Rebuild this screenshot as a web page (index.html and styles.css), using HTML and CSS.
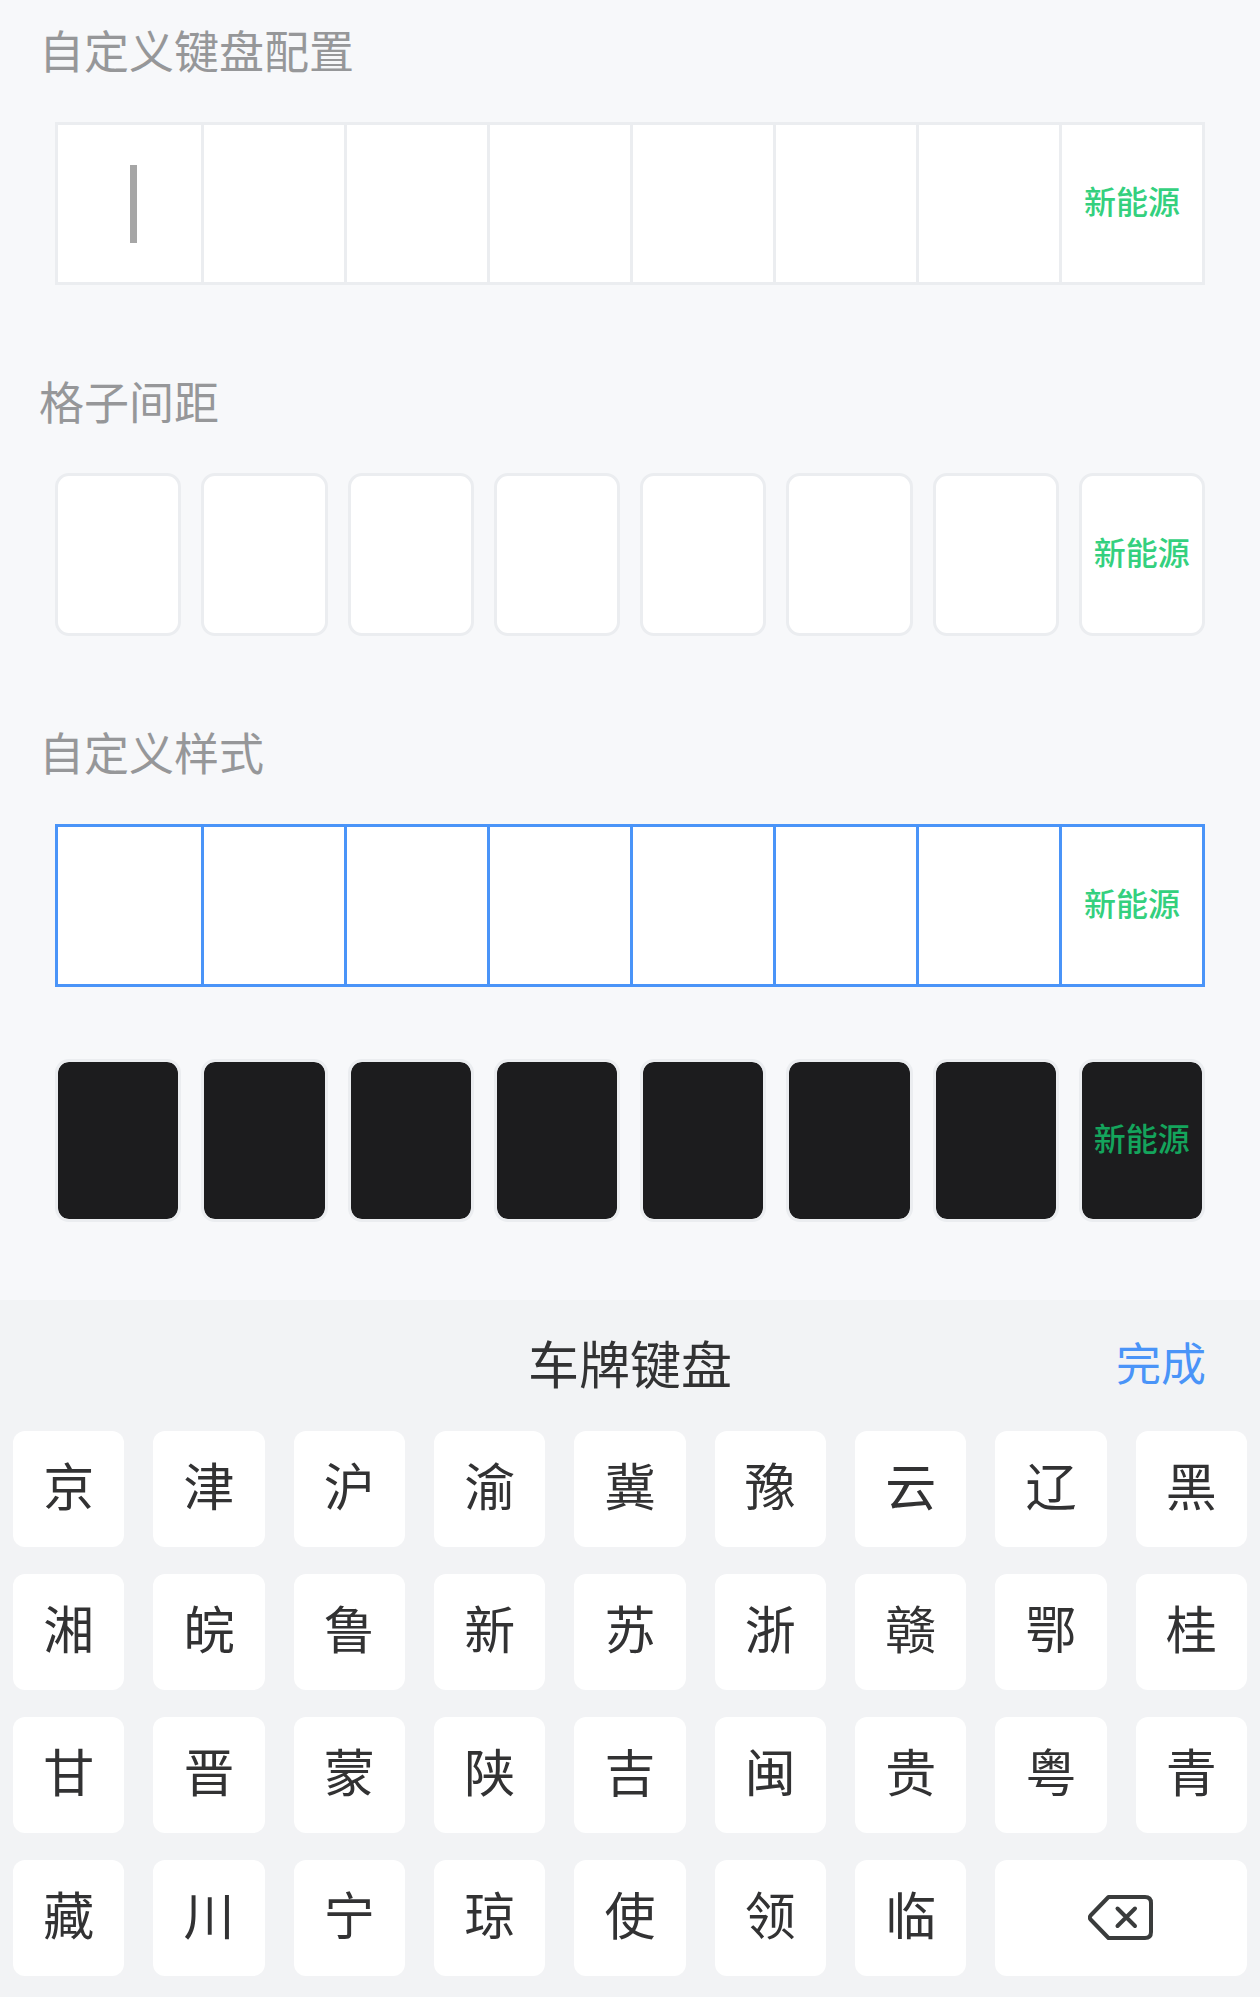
FILE: index.html
```
<!DOCTYPE html>
<html lang="zh-CN">
<head>
<meta charset="utf-8">
<meta name="viewport" content="width=device-width, initial-scale=1">
<title>车牌键盘</title>
<link rel="stylesheet" href="styles.css">
</head>
<body>
<main class="demo">
  <section class="block">
    <h2 class="block-title">自定义键盘配置</h2>
    <div class="plate plate-joined">
      <button class="cell" aria-label="第1位"><span class="caret"></span></button>
      <button class="cell" aria-label="第2位"></button>
      <button class="cell" aria-label="第3位"></button>
      <button class="cell" aria-label="第4位"></button>
      <button class="cell" aria-label="第5位"></button>
      <button class="cell" aria-label="第6位"></button>
      <button class="cell" aria-label="第7位"></button>
      <button class="cell">新能源</button>
    </div>
  </section>
  <section class="block">
    <h2 class="block-title">格子间距</h2>
    <div class="plate plate-spaced">
      <button class="cell" aria-label="第1位"></button>
      <button class="cell" aria-label="第2位"></button>
      <button class="cell" aria-label="第3位"></button>
      <button class="cell" aria-label="第4位"></button>
      <button class="cell" aria-label="第5位"></button>
      <button class="cell" aria-label="第6位"></button>
      <button class="cell" aria-label="第7位"></button>
      <button class="cell">新能源</button>
    </div>
  </section>
  <section class="block">
    <h2 class="block-title">自定义样式</h2>
    <div class="plate plate-joined plate-blue">
      <button class="cell" aria-label="第1位"></button>
      <button class="cell" aria-label="第2位"></button>
      <button class="cell" aria-label="第3位"></button>
      <button class="cell" aria-label="第4位"></button>
      <button class="cell" aria-label="第5位"></button>
      <button class="cell" aria-label="第6位"></button>
      <button class="cell" aria-label="第7位"></button>
      <button class="cell">新能源</button>
    </div>
    <div class="plate plate-spaced plate-dark">
      <button class="cell" aria-label="第1位"></button>
      <button class="cell" aria-label="第2位"></button>
      <button class="cell" aria-label="第3位"></button>
      <button class="cell" aria-label="第4位"></button>
      <button class="cell" aria-label="第5位"></button>
      <button class="cell" aria-label="第6位"></button>
      <button class="cell" aria-label="第7位"></button>
      <button class="cell">新能源</button>
    </div>
  </section>
</main>
<section class="keyboard" aria-label="车牌键盘">
  <header class="keyboard-head">
    <h2 class="keyboard-title">车牌键盘</h2>
    <button class="done">完成</button>
  </header>
  <div class="keys">
    <button class="key">京</button>
    <button class="key">津</button>
    <button class="key">沪</button>
    <button class="key">渝</button>
    <button class="key">冀</button>
    <button class="key">豫</button>
    <button class="key">云</button>
    <button class="key">辽</button>
    <button class="key">黑</button>
    <button class="key">湘</button>
    <button class="key">皖</button>
    <button class="key">鲁</button>
    <button class="key">新</button>
    <button class="key">苏</button>
    <button class="key">浙</button>
    <button class="key">赣</button>
    <button class="key">鄂</button>
    <button class="key">桂</button>
    <button class="key">甘</button>
    <button class="key">晋</button>
    <button class="key">蒙</button>
    <button class="key">陕</button>
    <button class="key">吉</button>
    <button class="key">闽</button>
    <button class="key">贵</button>
    <button class="key">粤</button>
    <button class="key">青</button>
    <button class="key">藏</button>
    <button class="key">川</button>
    <button class="key">宁</button>
    <button class="key">琼</button>
    <button class="key">使</button>
    <button class="key">领</button>
    <button class="key">临</button>
    <button class="key key-delete" aria-label="删除">
      <svg class="delete-icon" width="66" height="46" viewBox="0 0 66 46" fill="none" stroke="#3a3c3c" stroke-width="4" stroke-linecap="round" stroke-linejoin="round" aria-hidden="true">
        <path d="M20.500 2H57Q63 2 63 8V37Q63 43 57 43H20.500L2.600 24.500Q1 22.500 2.600 20.500Z"/>
        <path d="M29.500 13.500L47 31M47 13.500L29.500 31"/>
      </svg>
    </button>
  </div>
</section>
</body>
</html>
```
FILE: styles.css
```
* {
  box-sizing: border-box;
}

body {
  margin: 0;
  min-height: 100vh;
  display: flex;
  flex-direction: column;
  background: #f7f8fa;
  font-family: "Noto Sans CJK SC", "Noto Sans", sans-serif;
}

button {
  margin: 0;
  padding: 0;
  border: 0;
  font: inherit;
  cursor: pointer;
}

.demo {
  flex: 1;
  padding: 20px 0 78px;
  display: flex;
  flex-direction: column;
  gap: 86px;
}

.block-title {
  margin: 0;
  padding: 0 39px;
  font-size: 45px;
  line-height: 60px;
  font-weight: 400;
  color: #969799;
}

.plate {
  height: 163px;
  margin: 42px 55px 0;
  display: grid;
  grid-template-columns: repeat(8, 1fr);
}

.plate + .plate {
  margin-top: 72px;
}

.cell {
  position: relative;
  min-width: 0;
  padding-bottom: 8px;
  background: #fff;
  color: #34d07e;
  font-size: 32px;
  line-height: 48px;
  font-weight: 500;
  white-space: nowrap;
}

.plate-joined {
  border: 3px solid #ebedf0;
}

.plate-joined .cell + .cell {
  border-left: 3px solid #ebedf0;
}

.plate-spaced {
  gap: 20px;
}

.plate-spaced .cell {
  border: 3px solid #ebedf0;
  border-radius: 14px;
}

.plate-blue,
.plate-blue .cell + .cell {
  border-color: #4a94f8;
}

.plate-dark .cell {
  background: #1c1c1e;
  background-clip: padding-box;
  color: #14a45c;
}

.caret {
  position: absolute;
  top: 50%;
  left: 50%;
  width: 7px;
  height: 78px;
  margin-top: -39px;
  background: #a6a6a6;
}

.keyboard {
  background: #f2f3f5;
  padding: 22px 13px 21px;
}

.keyboard-head {
  display: grid;
  grid-template-columns: 1fr auto 1fr;
  align-items: center;
  padding: 0 41px 29px;
}

.keyboard-title {
  grid-column: 2;
  margin: 0;
  font-size: 51px;
  line-height: 80px;
  font-weight: 400;
  color: #323233;
}

.done {
  justify-self: end;
  background: none;
  color: #4a94f8;
  font-size: 45px;
  line-height: 60px;
}

.keys {
  display: grid;
  grid-template-columns: repeat(9, 1fr);
  grid-auto-rows: 116px;
  gap: 27px 29px;
}

.key {
  display: flex;
  align-items: center;
  justify-content: center;
  min-width: 0;
  padding-bottom: 10px;
  border-radius: 12px;
  background: #fff;
  color: #323233;
  font-size: 51px;
  line-height: 80px;
}

.key-delete {
  grid-column: span 2;
  padding-bottom: 0;
}
```
